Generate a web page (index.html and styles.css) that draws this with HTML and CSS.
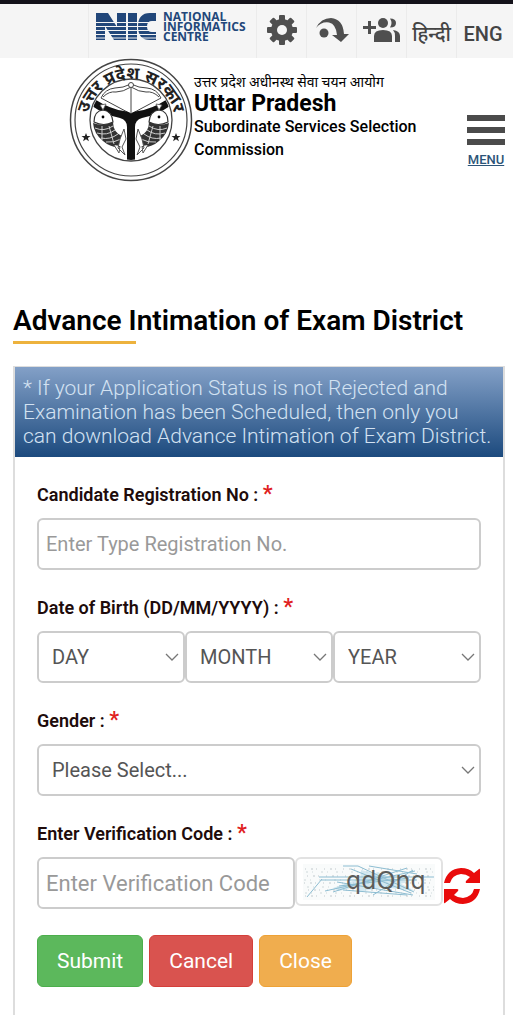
FILE: index.html
```html
<!DOCTYPE html>
<html lang="en">
<head>
<meta charset="utf-8">
<meta name="viewport" content="width=device-width, initial-scale=1">
<title>Advance Intimation of Exam District</title>
<link rel="stylesheet" href="styles.css">
</head>
<body>
<nav class="topbar" aria-label="Utilities">
  <a class="tool tool-nic" href="#" aria-label="National Informatics Centre">
    <svg width="154" height="42" viewBox="0 -6 154 42">
      <path fill="#22477a" d="M0 0h12l9 14V0h9v27H18L9 13v14H0zM32 0h9v27h-9zM60 0v8h-4q-5 0-5 5.500t5 5.500h4v8h-6q-12 0-12-13.500T54 0z"/>
      <path d="M0 9.500h60M0 13.500h60M0 17.500h60M0 21.500h60M0 25h60" stroke="#f5f5f5" stroke-width="1"/>
      <g class="nic-text">
        <text x="67" y="8">NATIONAL</text>
        <text x="67" y="18">INFORMATICS</text>
        <text x="67" y="28">CENTRE</text>
      </g>
    </svg>
  </a>
  <a class="tool" href="#" aria-label="Settings">
    <svg width="30" height="30" viewBox="0 0 30 30"><g fill="#4f4f4f"><rect x="12" y="0" width="6" height="30" rx="1"/><rect x="0" y="12" width="30" height="6" rx="1"/><g transform="rotate(45 15 15)"><rect x="12" y="0" width="6" height="30" rx="1"/><rect x="0" y="12" width="30" height="6" rx="1"/></g><circle cx="15" cy="15" r="11"/></g><circle cx="15" cy="15" r="5" fill="#f5f5f5"/></svg>
  </a>
  <a class="tool" href="#" aria-label="Skip to main content">
    <svg width="34" height="26" viewBox="0 0 34 26" fill="#4f4f4f"><circle cx="9" cy="16" r="4.500"/><path d="M1 11Q6 1 16 1q12 1 13 16h5l-8 8-9-7h5Q21 7 14 5.500 6 4.500 1 11z"/></svg>
  </a>
  <a class="tool" href="#" aria-label="Social media">
    <svg width="38" height="26" viewBox="0 0 38 26" fill="#4f4f4f"><path d="M5 4h3v5h5v3H8v5H5v-5H0V9h5z"/><circle cx="20" cy="6" r="5"/><path d="M11 25v-6q0-6 9-6t9 6v6zM27 1.500q6 0 6 4.500t-6 4.500q3-4.500 0-9zM30 13q7 1 7 6v6h-5v-6q0-4-2-6z"/></svg>
  </a>
  <a class="tool tool-text" href="#" lang="hi">हिन्दी</a>
  <a class="tool tool-text tool-eng" href="#">ENG</a>
</nav>

<header class="header">
  <a class="brand" href="#">
    <svg class="seal" viewBox="0 0 124 124" role="img" aria-label="Government of Uttar Pradesh emblem">
      <defs>
        <path id="arc" d="M20 78A44 44 0 1 1 104 78"/>
        <clipPath id="inner"><circle cx="62" cy="62" r="40"/></clipPath>
        <g id="fish">
          <path d="M25 64q0-11 9-12 9 1 10 12-9 5-19 0z" fill="#fff" stroke="#333" stroke-width="1.200"/>
          <path d="M34 52l-3-5 6-1z" fill="#fff" stroke="#555" stroke-width=".8"/>
          <circle cx="34" cy="59" r="1.400"/>
          <path d="M24 65q10 4 20-1 0 10 9 14l-2 11q-9 1-17-6-9-7-10-18z" fill="#333"/>
          <path d="M26 70q9 4 18-2M28 75q10 3 18-3M32 80q9 2 17-4M37 84q8 1 15-3M33 68v14M40 68l5 18" fill="none" stroke="#ddd" stroke-width=".9"/>
          <path d="M51 81l4-10 2 10-4 8 3 8-7-7zM45 87l5 8 1-7" fill="#fff" stroke="#555" stroke-width="1"/>
        </g>
      </defs>
      <g fill="none" stroke="#444">
        <circle cx="62" cy="62" r="60.500" stroke-width="1.500"/>
        <circle cx="62" cy="62" r="56" stroke-width="1.200"/>
        <circle cx="62" cy="62" r="41" stroke-width="1.300"/>
        <path d="M32 40l30 16 30-16M62 26v34" stroke-width="1"/>
        <path d="M32 40q4-9 14-10 8 0 16-4 8 4 16 4 10 1 14 10M34 39q6-6 13-5 7 0 15-5 8 5 15 5 7-1 13 5" stroke-width="1"/>
      </g>
      <circle cx="62" cy="27" r="2.500" fill="#fff" stroke="#444"/>
      <path clip-path="url(#inner)" d="M23 48l4-6q14 9 28 11 6 1 7 3 1-2 7-3 14-2 28-11l4 6q-13 9-28 12-7 2-7 9v33h-8V69q0-7-7-9-15-3-28-12z" fill="#111"/>
      <g><use href="#fish"/><use href="#fish" transform="matrix(-1 0 0 1 124 0)"/></g>
      <path id="star" d="M17 75l1.200 3h3.300l-2.600 2 1 3.200-2.900-1.900-2.900 1.900 1-3.200-2.600-2h3.300z" fill="#222"/>
      <use href="#star" x="90"/>
      <text class="seal-text" lang="hi"><textPath href="#arc" startOffset="50%" text-anchor="middle">उत्तर प्रदेश सरकार</textPath></text>
    </svg>
    <span class="brand-text">
      <span class="brand-hindi" lang="hi">उत्तर प्रदेश अधीनस्थ सेवा चयन आयोग</span>
      <strong class="brand-name">Uttar Pradesh</strong>
      <span class="brand-sub">Subordinate Services Selection Commission</span>
    </span>
  </a>
  <button class="menu" type="button">
    <span class="menu-bar"></span><span class="menu-bar"></span><span class="menu-bar"></span>
    <span class="menu-label">MENU</span>
  </button>
</header>

<main class="main">
  <h1 class="title">Advance Intimation of Exam District</h1>
  <section class="panel">
    <p class="notice">* If your Application Status is not Rejected and Examination has been Scheduled, then only you can download Advance Intimation of Exam District.</p>
    <form class="form">
      <div class="field">
        <label class="label" for="reg">Candidate Registration No : <span class="req">*</span></label>
        <input class="control" id="reg" type="text" placeholder="Enter Type Registration No.">
      </div>
      <div class="field">
        <label class="label" for="day">Date of Birth (DD/MM/YYYY) : <span class="req">*</span></label>
        <div class="dates">
          <span class="select-wrap"><select class="control select" id="day"><option>DAY</option></select><svg class="chevron" viewBox="0 0 14 8"><path d="M1 1l6 6 6-6"/></svg></span>
          <span class="select-wrap"><select class="control select" aria-label="Month"><option>MONTH</option></select><svg class="chevron" viewBox="0 0 14 8"><path d="M1 1l6 6 6-6"/></svg></span>
          <span class="select-wrap"><select class="control select" aria-label="Year"><option>YEAR</option></select><svg class="chevron" viewBox="0 0 14 8"><path d="M1 1l6 6 6-6"/></svg></span>
        </div>
      </div>
      <div class="field">
        <label class="label" for="gender">Gender : <span class="req">*</span></label>
        <span class="select-wrap"><select class="control select" id="gender"><option>Please Select...</option></select><svg class="chevron" viewBox="0 0 14 8"><path d="M1 1l6 6 6-6"/></svg></span>
      </div>
      <div class="field">
        <label class="label" for="code">Enter Verification Code : <span class="req">*</span></label>
        <div class="verify">
          <input class="control code" id="code" type="text" placeholder="Enter Verification Code">
          <span class="captcha">
            <svg width="132" height="36" viewBox="0 0 132 36">
              <rect width="132" height="36" fill="#f9fbfb"/>
              <path d="M2 5h129M4 12h125M1 19h128M5 26h126M2 32h127" stroke="#dde2e4" stroke-width="2" stroke-dasharray="1 5 2 3 1 7"/>
              <path d="M3 8h127M1 16h129M4 23h127M2 29h128" stroke="#e4eaeb" stroke-width="2" stroke-dasharray="2 4 1 8"/>
              <path d="M30 24L75 8l37 19-58-7 54-10-72 17zM58 6l48 12-50 10z" fill="#b9dcea" opacity=".6"/>
              <g fill="none" stroke="#8dbdd2" stroke-width="1"><path d="M4 33L19 15M16 13h115M18 16h96M40 2h15l56 26M48 5l60 24M66 2l48 8M22 27l90-20M30 28L104 4M36 22l70-8M40 26l64 5M70 31l40-25M34 18l76 13"/></g>
              <text class="captcha-text" x="43" y="25">qdQnq</text>
            </svg>
          </span>
          <button class="refresh" type="button" aria-label="Refresh code">
            <svg viewBox="0 0 38 38" fill="#e90b0b"><path d="M1 16Q4 2 18 1q8 0 13 5l5-4q1-1 1 1v13H24q-2 0-1-2l4-4q-4-3-9-3-9 1-11 9zM37 22Q34 36 20 37q-8 0-13-5l-5 4q-1 1-1-1V22h13q2 0 1 2l-4 4q4 3 9 3 9-1 11-9z"/></svg>
          </button>
        </div>
      </div>
      <div class="actions">
        <button class="btn btn-submit" type="submit">Submit</button>
        <button class="btn btn-cancel" type="reset">Cancel</button>
        <button class="btn btn-close" type="button">Close</button>
      </div>
    </form>
  </section>
</main>
</body>
</html>
```
FILE: styles.css
```css
* { box-sizing: border-box; }
body {
  margin: 0;
  background: #fff;
  color: #000;
  font-family: Roboto, "Noto Sans", "Noto Sans Devanagari", sans-serif;
}
a { color: inherit; text-decoration: none; }
button { font-family: inherit; cursor: pointer; }

.topbar {
  display: flex;
  justify-content: flex-end;
  height: 58px;
  border-top: 4px solid #14121a;
  background: #f5f5f5;
}
.tool {
  display: flex;
  align-items: center;
  justify-content: center;
  width: 50px;
  padding-bottom: 2px;
  border-left: 1px solid #ebebeb;
}
.tool-nic {
  width: 168px;
  align-items: flex-start;
  padding-top: 3px;
}
.tool-text {
  color: #444;
  font-size: 20px;
  font-weight: 500;
  padding-top: 7px;
}
.tool-eng { width: 57px; padding-right: 4px; }
.nic-text {
  fill: #22477a;
  font: 700 12px "Open Sans", sans-serif;
}

.header {
  display: flex;
  justify-content: space-between;
  align-items: flex-start;
  padding: 0 7px 0 69px;
}
.brand { display: flex; flex: 1; }
.seal { flex: none; width: 124px; height: 124px; }
.seal-text { font: 700 17px "Noto Sans Devanagari", "Noto Sans", sans-serif; fill: #222; }
.brand-text {
  display: flex;
  flex-direction: column;
  max-width: 240px;
  padding: 14px 0 0 1px;
}
.brand-hindi { font-size: 14px; line-height: 20px; white-space: nowrap; }
.brand-name { font-size: 23px; line-height: 23px; font-weight: 700; }
.brand-sub { font-size: 16px; line-height: 23px; font-weight: 500; }
.menu {
  display: flex;
  flex-direction: column;
  align-items: center;
  gap: 6px;
  width: 40px;
  margin-top: 57px;
  padding: 0;
  border: 0;
  background: none;
}
.menu-bar { width: 38px; height: 6px; background: #4b4b4b; }
.menu-label {
  color: #2c5478;
  font-size: 13px;
  line-height: 18px;
  font-weight: 500;
  text-decoration: underline;
}

.main { padding: 121px 8px 12px 13px; }
.title {
  margin: 0 0 18px;
  padding-bottom: 4px;
  font-size: 28px;
  line-height: 36px;
  font-weight: 600;
}
.title::after {
  content: "";
  display: block;
  width: 25%;
  height: 3px;
  margin-top: 2px;
  background: #edb23d;
}
.panel {
  border: solid #ddd;
  border-width: 1px 2px 0;
}
.notice {
  margin: 0;
  padding: 9px 8px;
  color: #d3e2f2;
  background: linear-gradient(#83a0c7, #1c4a7e);
  font-size: 21px;
  line-height: 24px;
  font-weight: 300;
}
.form { padding: 26px 22px 28px; }
.field { margin-bottom: 26px; }
.label {
  display: block;
  margin-bottom: 11px;
  color: #200b0b;
  font-size: 18px;
  line-height: 24px;
  font-weight: 600;
}
.req { color: #e02020; font-size: 22px; line-height: 16px; }
.control {
  display: block;
  width: 100%;
  height: 52px;
  padding: 0 7px;
  border: 2px solid #ccc;
  border-radius: 6px;
  background: #fff;
  color: #555;
  font: 400 20px Roboto, sans-serif;
}
.control::placeholder { color: #999; opacity: 1; }
.select { appearance: none; padding-left: 13px; }
.select-wrap { position: relative; display: block; flex: 1; }
.chevron {
  position: absolute;
  top: 22px;
  right: 6px;
  width: 14px;
  height: 8px;
  fill: none;
  stroke: #777;
  stroke-width: 1.3;
  pointer-events: none;
}
.dates { display: flex; }
.verify { display: flex; align-items: flex-start; }
.code { flex: 1; min-width: 0; font-size: 22px; }
.captcha {
  display: flex;
  align-items: center;
  justify-content: center;
  width: 148px;
  height: 49px;
  border: 2px solid #e2e2e2;
  border-radius: 6px;
}
.captcha-text { font: 24px "DejaVu Sans", sans-serif; fill: #5c5c59; }
.refresh {
  width: 38px;
  height: 38px;
  margin-top: 10px;
  padding: 0;
  border: 0;
  background: none;
}
.refresh svg { display: block; }
.actions { display: flex; gap: 6px; }
.btn {
  height: 52px;
  padding: 0 19px;
  border: 1px solid;
  border-radius: 6px;
  color: #fff;
  font-size: 21px;
}
.btn-submit { background: #5cb85c; border-color: #4cae4c; }
.btn-cancel { background: #d9534f; border-color: #d43f3a; }
.btn-close { background: #f0ad4e; border-color: #eea236; }
```
